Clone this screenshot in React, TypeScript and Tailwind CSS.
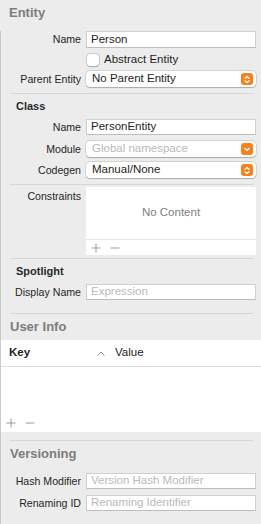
import React from "react";

const font = { fontFamily: '"Liberation Sans", Arial, sans-serif' };

function Separator({ className = "" }: { className?: string }) {
  return <div className={"h-px bg-[#d6d6d6] ml-[9px] mr-[8px] " + className} />;
}

function Stepper({ single }: { single?: boolean }) {
  return (
    <div className="w-[12px] h-[12px] rounded-[3px] bg-[#f7821b] flex items-center justify-center">
      <svg width="8" height="9" viewBox="0 0 8 9" fill="none" stroke="white" strokeWidth="1.3" strokeLinecap="round" strokeLinejoin="round">
        {single ? (
          <path d="M2 3.5 L4 5.5 L6 3.5" />
        ) : (
          <>
            <path d="M2 3.3 L4 1.5 L6 3.3" />
            <path d="M2 5.7 L4 7.5 L6 5.7" />
          </>
        )}
      </svg>
    </div>
  );
}

function Row({ label, children, className = "" }: { label: string; children: React.ReactNode; className?: string }) {
  return (
    <div className={"flex items-center " + className}>
      <div className="w-[80px] text-right text-[10.6px] text-[#262626] leading-none">{label}</div>
      <div className="ml-[5px] mr-[5px] flex-1">{children}</div>
    </div>
  );
}

function TextField({ value, placeholder, h = "h-[16px]" }: { value?: string; placeholder?: string; h?: string }) {
  return (
    <div className={"bg-white border border-[#cfcfcf] border-b-[#bdbdbd] flex items-center px-[4px] " + h}>
      {value ? (
        <span className="text-[11.5px] text-[#1e1e1e]">{value}</span>
      ) : (
        <span className="text-[11.5px] text-[#b9b9b9]">{placeholder}</span>
      )}
    </div>
  );
}

function Popup({ value, placeholder, single }: { value?: string; placeholder?: string; single?: boolean }) {
  return (
    <div className="h-[16px] bg-white rounded-[4px] shadow-[0_0_0_0.5px_rgba(0,0,0,0.18),0_0.5px_1px_rgba(0,0,0,0.2)] flex items-center pl-[6px] pr-[3px]">
      <span className={"flex-1 text-[11.5px] " + (value ? "text-[#1e1e1e]" : "text-[#b9b9b9]")}>{value || placeholder}</span>
      <Stepper single={single} />
    </div>
  );
}

function PlusMinus({ className = "" }: { className?: string }) {
  return (
    <div className={"flex items-center gap-[9px] " + className}>
      <svg width="10" height="10" viewBox="0 0 10 10" stroke="#9a9a9a" strokeWidth="1">
        <path d="M5 0.5 V9.5 M0.5 5 H9.5" />
      </svg>
      <svg width="10" height="10" viewBox="0 0 10 10" stroke="#9a9a9a" strokeWidth="1">
        <path d="M0.5 5 H9.5" />
      </svg>
    </div>
  );
}

export default function App() {
  return (
    <div className="w-[261px] h-[524px] bg-[#ececec] overflow-hidden" style={font}>
      <div className="h-[25px] pl-[9px] flex items-center text-[13px] font-bold text-[#7d7d7d]">Entity</div>
      <div className="border-l border-[#c9c9c9] h-[499px]">
        <Row label="Name" className="mt-[6px]">
          <TextField value="Person" h="h-[17px]" />
        </Row>
        <div className="flex items-center mt-[5px] h-[13px]">
          <div className="ml-[86px] w-[12px] h-[12px] bg-white rounded-[3px] shadow-[0_0_0_0.5px_rgba(0,0,0,0.25),0_0.5px_1px_rgba(0,0,0,0.2)]" />
          <span className="ml-[5px] text-[11.5px] text-[#1e1e1e]">Abstract Entity</span>
        </div>
        <Row label="Parent Entity" className="mt-[5px]">
          <Popup value="No Parent Entity" />
        </Row>
        <Separator className="mt-[6px]" />

        <div className="mt-[5px] h-[14px] pl-[15px] flex items-center text-[11px] font-bold text-[#2a2a2a]">Class</div>
        <Row label="Name" className="mt-[6px]">
          <TextField value="PersonEntity" />
        </Row>
        <Row label="Module" className="mt-[6px]">
          <Popup placeholder="Global namespace" single />
        </Row>
        <Row label="Codegen" className="mt-[5px]">
          <Popup value="Manual/None" />
        </Row>
        <Separator className="mt-[6px]" />

        <div className="flex items-start mt-[2px]">
          <div className="w-[80px] text-right text-[10.6px] text-[#262626] pt-[2px]">Constraints</div>
          <div className="ml-[5px] mr-[5px] flex-1 h-[68px] bg-white flex flex-col">
            <div className="flex-1 flex items-center justify-center text-[11.5px] text-[#808080]">No Content</div>
            <div className="h-[16px] border-t border-[#e3e3e3] flex items-center pl-[5px]">
              <PlusMinus />
            </div>
          </div>
        </div>
        <Separator className="mt-[3px]" />

        <div className="mt-[5px] h-[14px] pl-[15px] flex items-center text-[11px] font-bold text-[#2a2a2a]">Spotlight</div>
        <Row label="Display Name" className="mt-[6px]">
          <TextField placeholder="Expression" />
        </Row>
        <Separator className="mt-[13px]" />

        <div className="h-[26px] pl-[9px] flex items-center text-[13px] font-bold text-[#7d7d7d]">User Info</div>
        <div className="bg-white h-[92px] flex flex-col">
          <div className="h-[27px] border-b border-[#dcdcdc] flex items-center text-[11.5px] text-[#1e1e1e]">
            <span className="pl-[8px] w-[96px] font-bold">Key</span>
            <svg width="8" height="5" viewBox="0 0 8 5" fill="none" stroke="#8a8a8a" strokeWidth="1">
              <path d="M0.5 4.5 L4 1 L7.5 4.5" />
            </svg>
            <span className="ml-[10px]">Value</span>
          </div>
          <div className="flex-1" />
          <PlusMinus className="h-[16px] pl-[5px] mb-[1px]" />
        </div>
        <Separator className="mt-[8px]" />

        <div className="h-[25px] pl-[9px] flex items-center text-[13px] font-bold text-[#7d7d7d]">Versioning</div>
        <Row label="Hash Modifier" className="mt-[7px]">
          <TextField placeholder="Version Hash Modifier" />
        </Row>
        <Row label="Renaming ID" className="mt-[6px]">
          <TextField placeholder="Renaming Identifier" />
        </Row>
      </div>
    </div>
  );
}
